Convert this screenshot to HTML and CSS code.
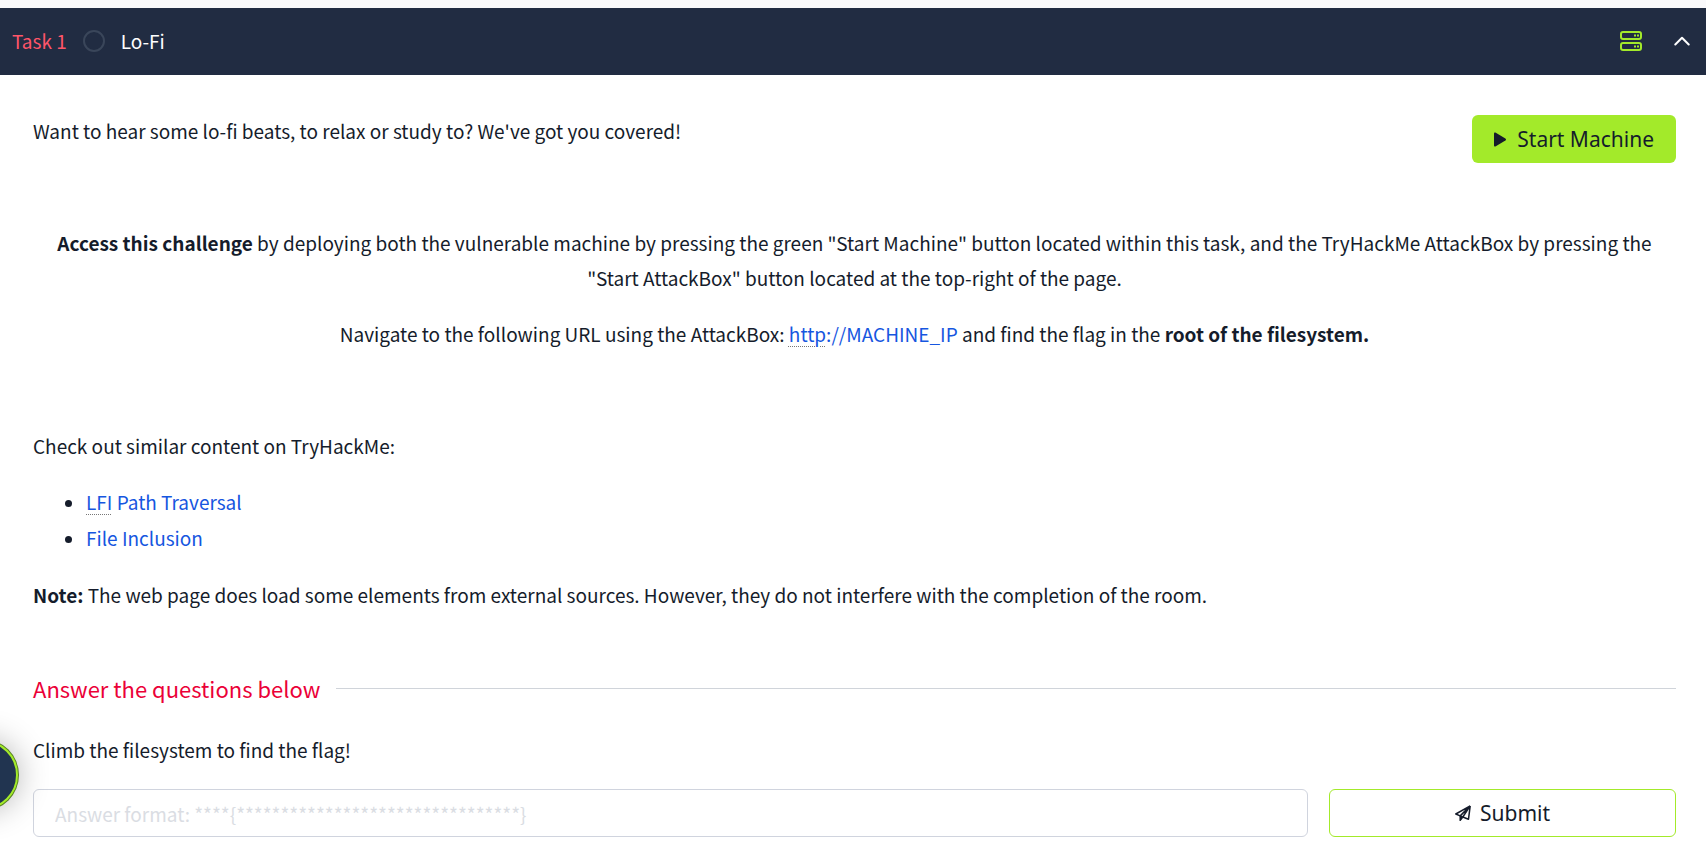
FILE: index.html
```html
<!DOCTYPE html>
<html lang="en">
<head>
<meta charset="utf-8">
<meta name="viewport" content="width=device-width, initial-scale=1">
<title>Lo-Fi</title>
<link rel="stylesheet" href="styles.css">
</head>
<body>
<main class="room">
  <header class="task-header">
    <span class="task-number">Task 1</span>
    <span class="task-status"></span>
    <h1 class="task-title">Lo-Fi</h1>
    <svg class="server-icon" viewBox="0 0 22 20" width="22" height="20" fill="none" stroke="currentColor" stroke-width="2" aria-hidden="true">
      <rect x="1" y="1" width="20" height="7" rx="2"/>
      <rect x="1" y="12" width="20" height="7" rx="2"/>
      <path d="M14 4.500h2M17 4.500h2M14 15.500h2M17 15.500h2"/>
    </svg>
    <button class="collapse" type="button" aria-label="Collapse task">
      <svg viewBox="0 0 16 10" width="16" height="10" fill="none" stroke="currentColor" stroke-width="2" stroke-linecap="round" stroke-linejoin="round"><path d="M1.300 8.500L8 1.800l6.700 6.700"/></svg>
    </button>
  </header>
  <section class="task-body">
    <div class="intro">
      <p>Want to hear some lo-fi beats, to relax or study to? We've got you covered!</p>
      <button class="start" type="button">
        <svg viewBox="0 0 12 15" width="12" height="15" fill="currentColor" aria-hidden="true"><path d="M0 1.500Q0 0 1.400.600L11.400 6.600Q12.600 7.500 11.400 8.400L1.400 14.400Q0 15 0 13.500z"/></svg>
        Start Machine
      </button>
    </div>
    <div class="access">
      <p><strong>Access this challenge</strong> by deploying both the vulnerable machine by pressing the green "Start Machine" button located within this task, and the TryHackMe AttackBox by pressing the "Start AttackBox" button located at the top-right of the page.</p>
      <p>Navigate to the following URL using the AttackBox: <a href="#machine"><span class="term">http</span>://MACHINE_IP</a> and find the flag in the <strong>root of the filesystem.</strong></p>
    </div>
    <p>Check out similar content on TryHackMe:</p>
    <ul class="related">
      <li><a href="#lfi"><span class="term">LFI</span> Path Traversal</a></li>
      <li><a href="#inclusion">File Inclusion</a></li>
    </ul>
    <p><strong>Note:</strong> The web page does load some elements from external sources. However, they do not interfere with the completion of the room.</p>
    <h2 class="questions">Answer the questions below</h2>
    <form class="question">
      <label for="answer">Climb the filesystem to find the flag!</label>
      <div class="answer-row">
        <input id="answer" type="text" placeholder="Answer format: ****{********************************}">
        <button class="submit" type="button">
          <svg viewBox="0 0 16 16" width="16" height="16" fill="none" stroke="currentColor" stroke-width="1.500" stroke-linejoin="round" aria-hidden="true"><path d="M15.200.900L.800 9l4.400 1.900M15.200.900L13.500 14.200 7.800 12M15.200.900L5.200 10.900M15.200.900L7.800 12"/><path d="M5.200 11v4.400l2.600-3.400z" fill="currentColor"/></svg>
          Submit
        </button>
      </div>
    </form>
  </section>
</main>
<button class="helper" type="button" aria-label="Open assistant"></button>
</body>
</html>
```
FILE: styles.css
```css
* { box-sizing: border-box; }
body {
  margin: 0;
  padding-top: 8px;
  background: #f9f9fb;
  color: #151c2b;
  font: 19px/35px "Noto Sans CJK SC", "Noto Sans", sans-serif;
  overflow: hidden;
}
p, h1, h2, ul { margin: 0; }
a { color: #1656e0; text-decoration: none; }
button { font-family: "Noto Sans", sans-serif; cursor: pointer; }
.room { background: #fff; }
.task-header {
  display: flex;
  align-items: center;
  height: 67px;
  padding: 0 16px 2px 12px;
  background: #212c42;
  color: #fff;
}
.task-number { color: #ff5569; }
.task-status {
  width: 22px;
  height: 22px;
  margin: 0 16px;
  border: 2px solid #3a465a;
  border-radius: 50%;
}
.task-title { font-size: 19px; font-weight: 400; }
.server-icon { margin: 0 32px 0 auto; color: #a3ea2a; }
.collapse { display: flex; padding: 0; border: 0; background: none; color: #fff; }
.task-body {
  display: flex;
  flex-direction: column;
  gap: 21px;
  padding: 38px 30px 7px 33px;
}
.intro { display: flex; justify-content: space-between; align-items: flex-start; }
.start {
  display: flex;
  align-items: center;
  gap: 11px;
  height: 48px;
  margin-top: 2px;
  padding: 0 22px;
  border: 0;
  border-radius: 6px;
  background: #a3ea2a;
  color: #151c2b;
  font-size: 21px;
}
.access {
  display: flex;
  flex-direction: column;
  gap: 21px;
  padding: 41px 0 56px;
  text-align: center;
}
.term { text-decoration: underline dotted #777 1px; text-underline-offset: 4px; }
.related { padding-left: 53px; line-height: 36px; }
.questions {
  display: flex;
  align-items: center;
  gap: 16px;
  margin-top: 38px;
  color: #eb0037;
  font-size: 22px;
  font-weight: 400;
}
.questions::after { content: ""; flex: 1; height: 1px; background: #d0d4da; }
.question { display: flex; flex-direction: column; gap: 22px; margin-top: 5px; }
.answer-row { display: grid; grid-template-columns: 1275fr 347fr; gap: 21px; }
.answer-row input, .submit { height: 48px; min-width: 0; border-radius: 6px; background: #fff; }
.answer-row input {
  padding: 0 21px;
  border: 1px solid #d0d4de;
  color: #151c2b;
  font: 19px "Noto Sans CJK SC", sans-serif;
}
.answer-row input::placeholder { color: #dadde3; opacity: 1; }
.submit {
  display: flex;
  justify-content: center;
  align-items: center;
  gap: 9px;
  border: 1px solid #a3ea2a;
  color: #151c2b;
  font-size: 21px;
}
.helper {
  position: fixed;
  left: -52px;
  bottom: 34px;
  width: 70px;
  height: 70px;
  border: 2px solid #a3ea2a;
  border-radius: 50%;
  background: #213450;
  box-shadow: 0 0 0 1px #568020, 0 0 32px rgba(0, 0, 0, .3);
}
```
